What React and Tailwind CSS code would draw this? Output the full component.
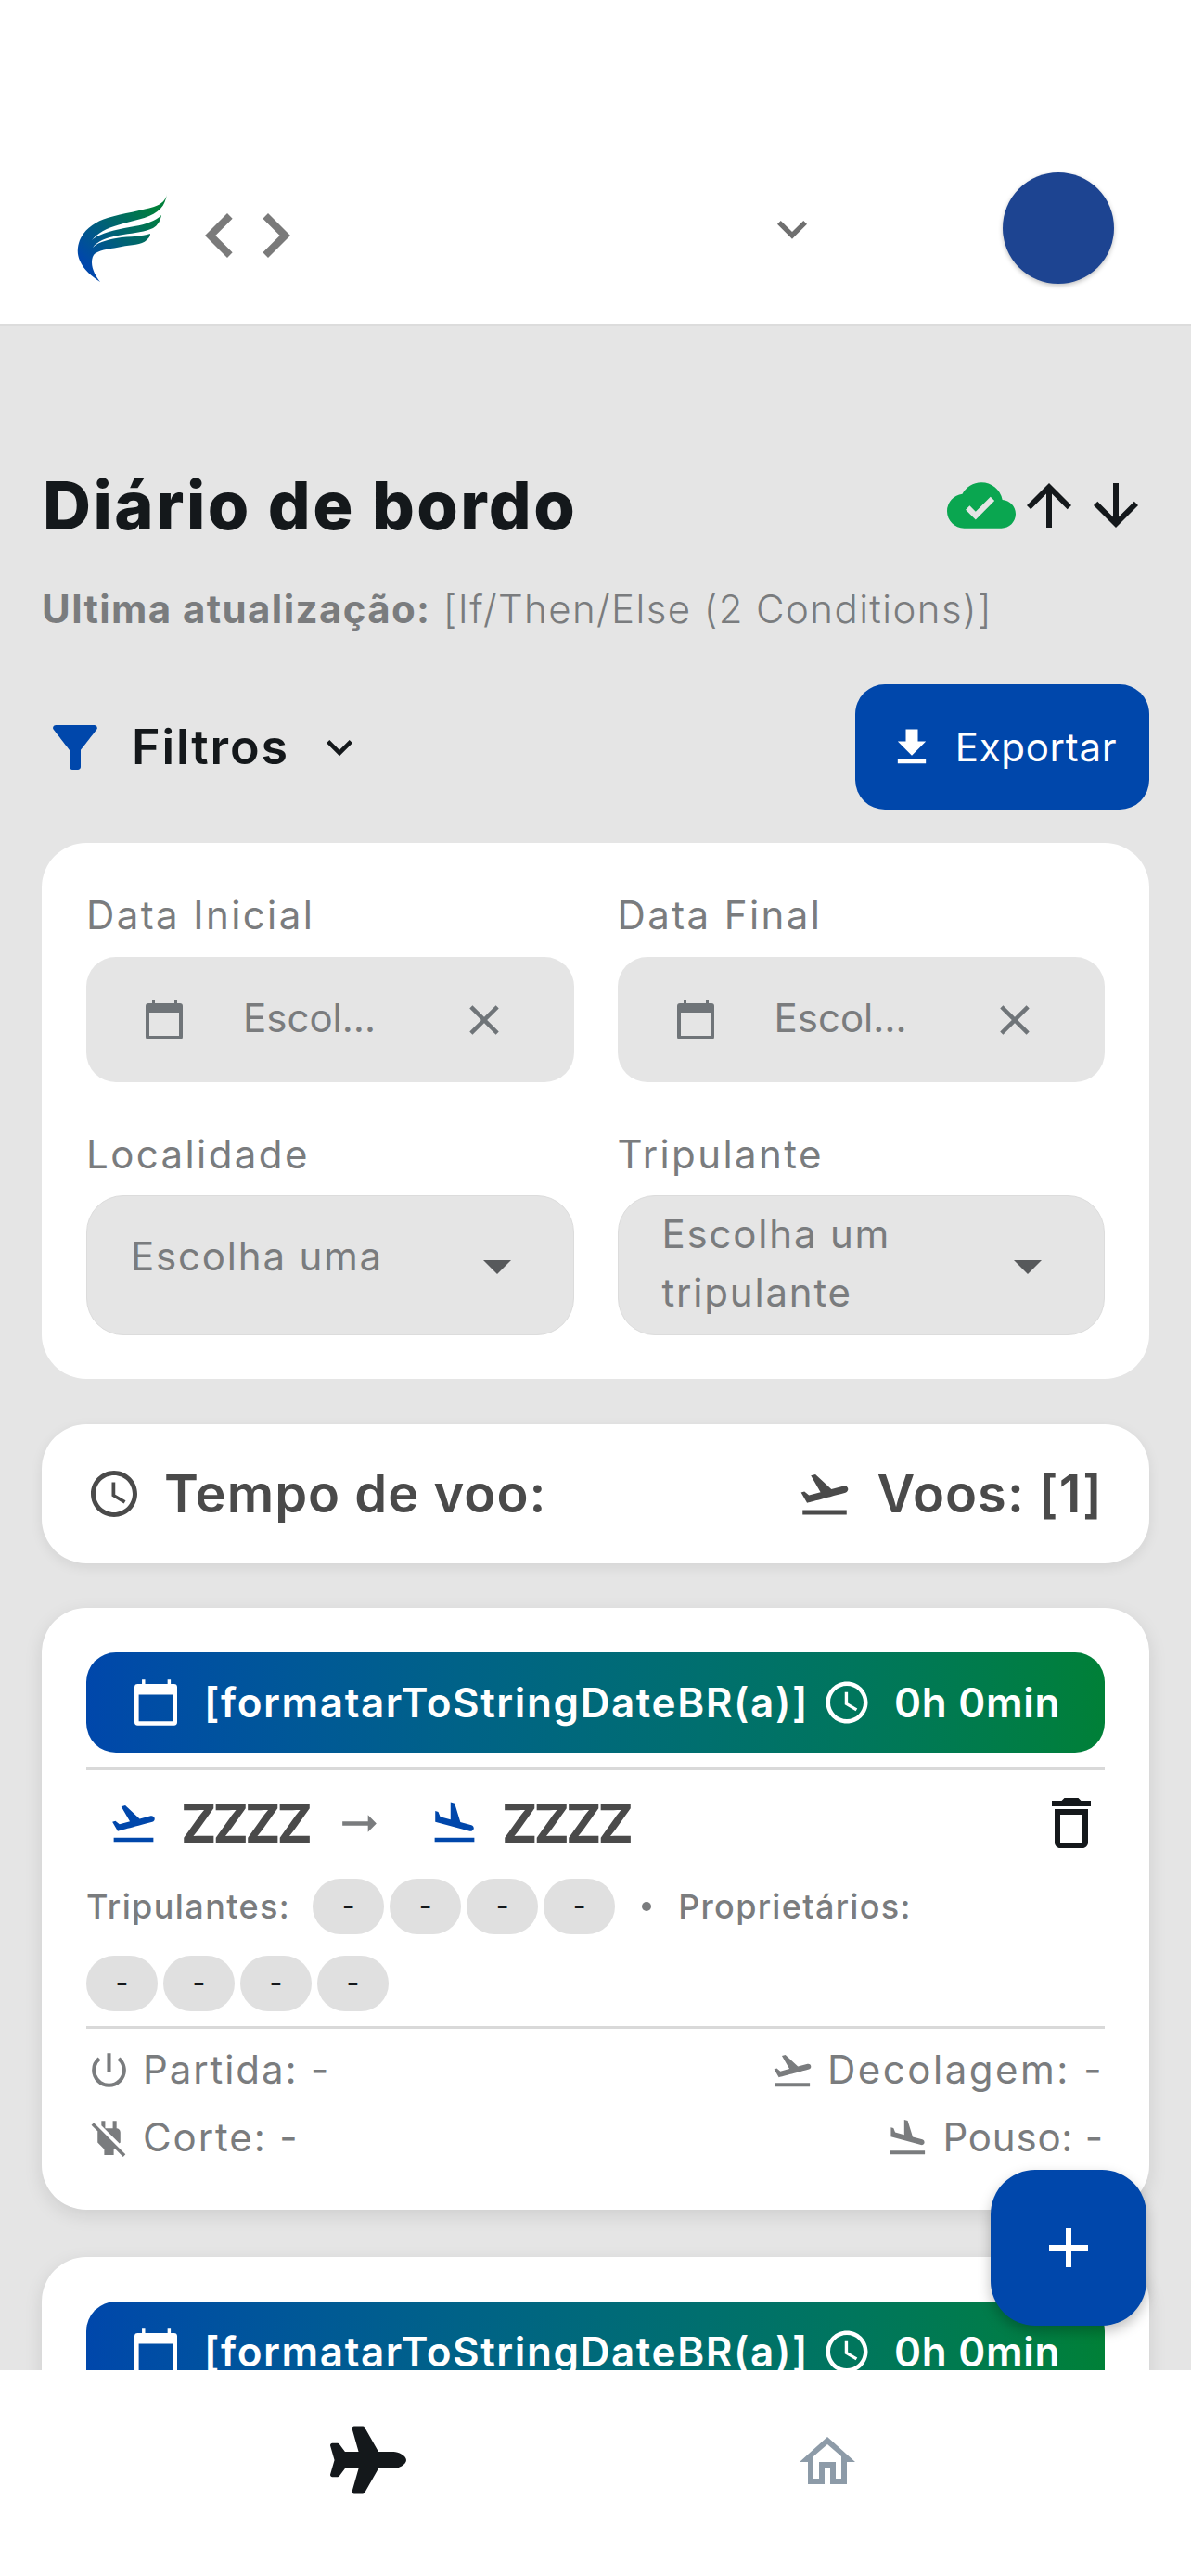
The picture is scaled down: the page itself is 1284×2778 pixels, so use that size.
import React from "react";
import {
  MdFilterAlt,
  MdFileDownload,
  MdCloudDone,
  MdClose,
  MdArrowDropDown,
  MdAccessTime,
  MdFlightTakeoff,
  MdFlightLand,
  MdOutlineDelete,
  MdPowerSettingsNew,
  MdPowerOff,
  MdAdd,
  MdArrowUpward,
  MdArrowDownward,
  MdKeyboardArrowDown,
  MdArrowRightAlt,
  MdChevronLeft,
  MdChevronRight,
} from "react-icons/md";
import { FaPlane } from "react-icons/fa";

function Logo() {
  return (
    <svg viewBox="0 0 98 96" className="w-[98px] h-[96px] shrink-0 mt-[22px]">
      <defs>
        <linearGradient id="wing" x1="0" y1="1" x2="1" y2="0">
          <stop offset="0.15" stopColor="#0047ab" />
          <stop offset="0.85" stopColor="#007f3a" />
        </linearGradient>
      </defs>
      <path
        fill="url(#wing)"
        d="M97 0C96 6 92 11 83 14C70 18 50 21 33 26C20 30 8 38 3 50C0 58 0 65 3 72C7 82 16 89 25 95C21 90 16 82 16 74C16 70 17 66 20 64C26 60 38 59 48 57C58 55 70 55 75 50C77 48 79 46 79 43C70 46 58 46 48 47C36 49 24 51 17 58C22 50 36 46 50 44C62 42 74 41 82 37C87 34 90 29 91 23C85 29 74 33 62 35C46 38 26 41 16 50C22 42 34 36 50 32C65 28 82 25 90 16C94 12 96 6 97 0Z"
      />
    </svg>
  );
}

function CalendarIcon({ className }) {
  return (
    <svg viewBox="0 0 40 43" className={className} fill="currentColor">
      <path
        fillRule="evenodd"
        d="M7 0h3v4h21V0h3v4h3a3 3 0 0 1 3 3v33a3 3 0 0 1-3 3H3a3 3 0 0 1-3-3V7a3 3 0 0 1 3-3h4z M4 14v25h32V14z"
      />
    </svg>
  );
}

function HomeIcon() {
  return (
    <svg viewBox="0 0 60 51" className="w-[60px] h-[51px] text-[#8d9ba8]" fill="currentColor">
      <path
        fillRule="evenodd"
        d="M30 0L60 27H51V51H33V33H27V51H9V27H0Z M30 8L15 21V45H21V27H39V45H45V21Z"
      />
    </svg>
  );
}

function DateField({ label }) {
  return (
    <div className="flex flex-col">
      <div className="text-[42px] leading-[60px] h-[60px] text-[#7a7c7e] tracking-[2.4px]">{label}</div>
      <div className="mt-[15px] h-[135px] rounded-[32px] bg-[#e5e5e5] flex items-center pl-[64px] pr-[70px]">
        <CalendarIcon className="w-[40px] h-[43px] text-[#6f7478] shrink-0" />
        <span className="ml-[65px] flex-1 text-[42px] text-[#7a7c7e] pb-[4px]">Escol…</span>
        <MdClose className="text-[#6f7478] shrink-0" size={54} />
      </div>
    </div>
  );
}

function SelectField({ label, lines }) {
  return (
    <div className="flex flex-col">
      <div className="text-[42px] leading-[60px] h-[60px] text-[#7a7c7e] tracking-[2.4px]">{label}</div>
      <div className="mt-[14px] h-[151px] rounded-[40px] bg-[#e5e5e5] border border-[#dcdcdc] flex items-center pl-[47px] pr-[46px]">
        <div className={`flex-1 text-[42px] leading-[63px] text-[#7a7c7e] tracking-[1.8px] ${lines.length === 1 ? "pb-[20px]" : "pb-[6px]"}`}>
          {lines.map((l) => (
            <div key={l}>{l}</div>
          ))}
        </div>
        <MdArrowDropDown className="text-[#57595b] shrink-0" size={72} />
      </div>
    </div>
  );
}

function Chip() {
  return (
    <span className="w-[77px] h-[60px] rounded-full bg-[#e0e0e0] flex items-center justify-center text-[30px] text-[#14181b] pb-[2px]">
      -
    </span>
  );
}

function Chips() {
  return (
    <div className="flex gap-[6px]">
      <Chip />
      <Chip />
      <Chip />
      <Chip />
    </div>
  );
}

function FlightCard() {
  return (
    <div className="bg-white rounded-[48px] px-[48px] pt-[48px] pb-[48px] shadow-[0_6px_20px_rgba(0,0,0,0.1)]">
      <div className="h-[108px] rounded-[32px] bg-gradient-to-r from-[#0047ab] to-[#008037] flex items-center pl-[52px] text-white">
        <CalendarIcon className="w-[46px] h-[50px] shrink-0" />
        <span className="ml-[29px] text-[44px] font-semibold tracking-[1.6px] whitespace-nowrap">[formatarToStringDateBR(a)]</span>
        <MdAccessTime className="ml-[14px] shrink-0" size={54} />
        <span className="ml-[24px] text-[44px] font-semibold tracking-[0.7px] whitespace-nowrap">0h 0min</span>
      </div>
      <div className="mt-[16px] h-[3px] bg-[#d9d9d9]" />
      <div className="mt-[22px] h-[70px] flex items-center pl-[24px]">
        <MdFlightTakeoff className="text-[#0047ab] shrink-0" size={54} />
        <span className="ml-[24px] text-[58px] font-bold tracking-[-4px] text-[#4a4a4a]">ZZZZ</span>
        <MdArrowRightAlt className="ml-[27px] text-[#7a7c7e] shrink-0" size={55} />
        <MdFlightLand className="ml-[48px] text-[#0047ab] shrink-0" size={54} />
        <span className="ml-[24px] text-[58px] font-bold tracking-[-4px] text-[#4a4a4a]">ZZZZ</span>
        <MdOutlineDelete className="ml-auto text-[#14181b] shrink-0" size={72} />
      </div>
      <div className="mt-[25px] flex flex-wrap items-center gap-y-[23px]">
        <span className="text-[36px] font-medium text-[#7a7c7e] tracking-[1.4px] mr-[24px]">Tripulantes:</span>
        <Chips />
        <span className="mx-[29px] w-[10px] h-[10px] rounded-full bg-[#7a7c7e]" />
        <span className="text-[36px] font-medium text-[#7a7c7e] tracking-[1.3px]">Proprietários:</span>
        <Chips />
      </div>
      <div className="mt-[16px] h-[3px] bg-[#d9d9d9]" />
      <div className="mt-[14px] grid grid-cols-2 gap-y-[13px] text-[42px] leading-[60px] text-[#7a7c7e] tracking-[1.9px]">
        <div className="flex items-center gap-[12px]">
          <MdPowerSettingsNew size={49} />
          Partida: -
        </div>
        <div className="flex items-center justify-end gap-[14px] pr-[1px]">
          <MdFlightTakeoff size={47} />
          <span className="tracking-[2.5px]">Decolagem: -</span>
        </div>
        <div className="flex items-center gap-[12px]">
          <MdPowerOff size={49} />
          Corte: -
        </div>
        <div className="flex items-center justify-end gap-[14px] pr-[1px]">
          <MdFlightLand size={47} />
          <span className="tracking-[0.8px]">Pouso: -</span>
        </div>
      </div>
    </div>
  );
}

export default function App() {
  return (
    <div className="relative h-[2778px] w-[1284px] overflow-hidden flex flex-col bg-[#e5e5e5] font-['Inter',sans-serif]">
      <header className="h-[352px] shrink-0 bg-white border-b-[3px] border-[#dcdcdc] flex items-end pb-[43px] pl-[83px] pr-[83px]">
        <div className="flex items-center h-[120px] w-full">
          <Logo />
          <MdChevronLeft className="ml-[8px] mt-[16px] text-[#7a7a7a] shrink-0" size={96} />
          <MdChevronRight className="ml-[-36px] mt-[16px] text-[#7a7a7a] shrink-0" size={96} />
          <MdKeyboardArrowDown className="ml-[477px] mt-[2px] text-[#6f6f6f] shrink-0" size={64} />
          <div className="ml-auto w-[120px] h-[120px] rounded-full bg-[#1d4491] shadow-[0_2px_5px_rgba(0,0,0,0.25)]" />
        </div>
      </header>

      <main className="flex-1 min-h-0 overflow-hidden px-[45px] pt-[158px]">
        <div className="flex items-center justify-between h-[70px] pl-[1px]">
          <h1 className="text-[72px] font-extrabold text-[#14181b] tracking-[2.4px] whitespace-nowrap">Diário de bordo</h1>
          <div className="flex items-center">
            <MdCloudDone className="text-[#0aa650] ml-[2px]" size={74} />
            <MdArrowUpward className="text-[#14181b]" size={72} />
            <MdArrowDownward className="text-[#14181b]" size={72} />
          </div>
        </div>
        <p className="mt-[52px] h-[50px] text-[42px] leading-[50px] text-[#7a7c7e] tracking-[1.4px] whitespace-nowrap">
          <span className="font-bold">Ultima atualização:</span> <span className="font-light">[If/Then/Else (2 Conditions)]</span>
        </p>
        <div className="mt-[56px] flex items-center justify-between h-[135px]">
          <div className="flex items-center">
            <MdFilterAlt className="text-[#0047ab]" size={72} />
            <span className="ml-[25px] text-[52px] font-semibold text-[#14181b] tracking-[1.9px]">Filtros</span>
            <MdKeyboardArrowDown className="ml-[26px] text-[#14181b]" size={56} />
          </div>
          <button className="w-[317px] h-[135px] rounded-[32px] bg-[#0047ab] flex items-center justify-center gap-[21px] text-white text-[42px] tracking-[0.7px]">
            <MdFileDownload size={52} />
            Exportar
          </button>
        </div>

        <section className="mt-[36px] h-[578px] bg-white rounded-[48px] px-[48px] pt-[48px] grid grid-cols-2 gap-x-[47px] gap-y-[48px] content-start">
          <DateField label="Data Inicial" />
          <DateField label="Data Final" />
          <SelectField label="Localidade" lines={["Escolha uma"]} />
          <SelectField label="Tripulante" lines={["Escolha um", "tripulante"]} />
        </section>

        <section className="mt-[49px] h-[150px] bg-white rounded-[48px] flex items-center justify-between pl-[48px] pr-[50px] shadow-[0_4px_14px_rgba(0,0,0,0.08)] text-[#4a4a4a]">
          <div className="flex items-center gap-[24px]">
            <MdAccessTime size={60} />
            <span className="text-[56px] font-semibold tracking-[1px]">Tempo de voo:</span>
          </div>
          <div className="flex items-center gap-[26px]">
            <MdFlightTakeoff size={60} />
            <span className="text-[56px] font-semibold tracking-[1px]">Voos: [1]</span>
          </div>
        </section>

        <div className="mt-[48px] flex flex-col gap-[51px]">
          <FlightCard />
          <FlightCard />
        </div>
      </main>

      <nav className="h-[222px] shrink-0 bg-white flex items-center pb-[28px] pl-[356px] gap-[424px]">
        <FaPlane className="text-[#14181b]" size={82} />
        <HomeIcon />
      </nav>

      <button className="absolute left-[1068px] top-[2340px] w-[168px] h-[168px] rounded-[48px] bg-[#0047ab] flex items-center justify-center text-white shadow-[0_6px_14px_rgba(0,0,0,0.25)]">
        <MdAdd size={72} />
      </button>
    </div>
  );
}
